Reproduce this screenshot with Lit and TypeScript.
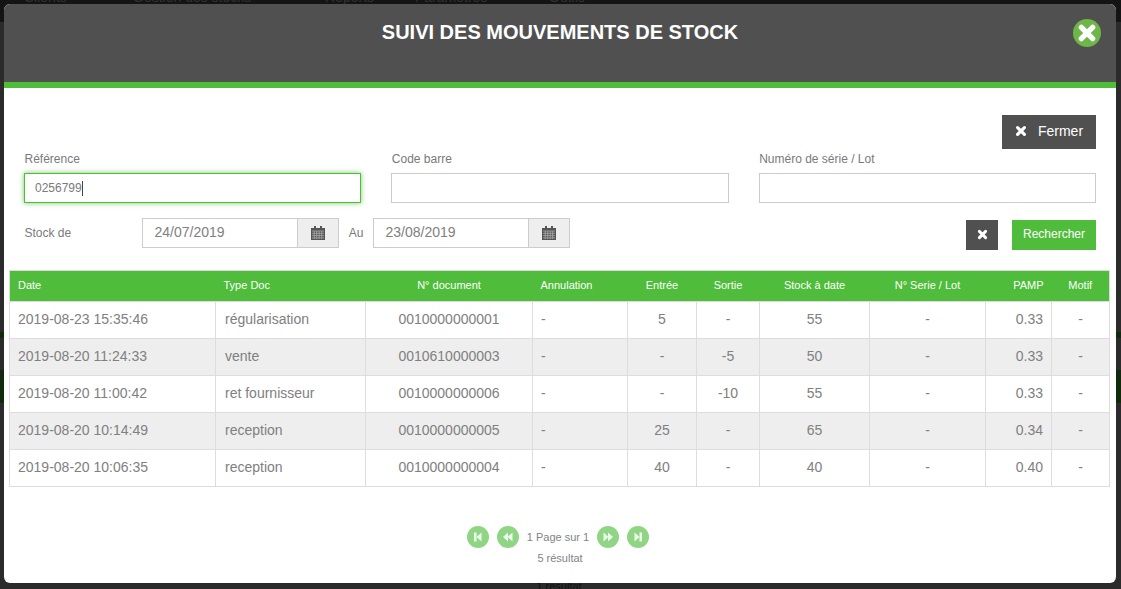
import { LitElement, html, css, svg } from "lit";
import { customElement } from "lit/decorators.js";

const rows = [
  ["2019-08-23 15:35:46", "régularisation", "0010000000001", "-", "5", "-", "55", "-", "0.33", "-"],
  ["2019-08-20 11:24:33", "vente", "0010610000003", "-", "-", "-5", "50", "-", "0.33", "-"],
  ["2019-08-20 11:00:42", "ret fournisseur", "0010000000006", "-", "-", "-10", "55", "-", "0.33", "-"],
  ["2019-08-20 10:14:49", "reception", "0010000000005", "-", "25", "-", "65", "-", "0.34", "-"],
  ["2019-08-20 10:06:35", "reception", "0010000000004", "-", "40", "-", "40", "-", "0.40", "-"],
];
const heads = ["Date", "Type Doc", "N° document", "Annulation", "Entrée", "Sortie", "Stock à date", "N° Serie / Lot", "PAMP", "Motif"];
const aligns = ["l", "l", "c", "l", "c", "c", "c", "c", "r", "c"];
const widths = [206, 150, 167, 95, 69, 63, 110, 116, 66, 58];

const times = (s: number) => html`<svg class="x" width=${s} height=${s} viewBox="0 0 12 12"><path d="M2.6 2.6 9.4 9.4M9.4 2.6 2.6 9.4" stroke="currentColor" stroke-width="3.2" stroke-linecap="round" fill="none"/></svg>`;
const calendar = html`<svg width="14" height="14" viewBox="0 0 14 14"><path fill="#555" d="M0 2h14v12H0z"/><path fill="#555" d="M3 0h2v3H3zM9 0h2v3H9z"/><path stroke="#b5b5b5" stroke-width=".7" fill="none" d="M1 5h12M1 7.300h12M1 9.600h12M1 11.900h12M3.200 5v8M5.700 5v8M8.200 5v8M10.700 5v8"/></svg>`;
const pagerIcons = {
  first: svg`<path d="M7 6.500h2.500v9H7zM14.500 6.500v9L9.500 11z"/>`,
  prev: svg`<path d="M11 6.500v9L6 11zM15.500 6.500v9L10.500 11z"/>`,
  next: svg`<path d="M6.500 6.500v9L11.500 11zM11 6.500v9L16 11z"/>`,
  last: svg`<path d="M7.500 6.500v9L12.500 11zM12.500 6.500H15v9h-2.500z"/>`,
};
const pager = (k: keyof typeof pagerIcons) => html`<span class="pg"><svg width="22" height="22" viewBox="0 0 22 22" fill="#fff" fill-opacity=".85">${pagerIcons[k]}</svg></span>`;

@customElement("app-root")
export class AppRoot extends LitElement {
  static styles = css`
    :host {
      display: block; width: 1121px; height: 589px;
      background: linear-gradient(#141414 0 22px, #2b2b2b 22px 332px, #112a0e 332px 338px, #2b2b2b 338px 370px, #112a0e 370px 403px, #2b2b2b 403px);
      font-family: "Liberation Sans", Arial, sans-serif; color: #7a7a7a; overflow: hidden;
    }
    * { box-sizing: border-box; }
    .top-strip { height: 4px; overflow: hidden; display: flex; align-items: flex-end; font-size: 14px; line-height: 16px; color: #303030; white-space: nowrap; background: #141414; }
    .top-strip span { flex: none; margin-bottom: -1px; }
    .n1 { margin-left: 24px; width: 109px; }
    .n2 { width: 192px; }
    .n3 { width: 90px; }
    .n4 { width: 134px; }
    .bottom-strip { height: 6px; overflow: hidden; text-align: center; font-size: 11px; line-height: 6px; color: #111; padding-right: 3px; }
    .modal { width: 1112px; height: 579px; margin-left: 4px; background: #fff; border-radius: 6px; overflow: hidden; display: flex; flex-direction: column; }
    .head { height: 84px; flex: none; background: #505050; border-bottom: 6px solid #4fbc3b; display: flex; justify-content: center; padding-top: 15px; position: relative; }
    .head h1 { margin: 0; font-size: 20px; line-height: 26px; font-weight: 700; color: #fff; }
    .close { position: absolute; top: 15px; right: 15px; width: 28px; height: 28px; border-radius: 50%; background: #6db648; color: #fff; display: flex; align-items: center; justify-content: center; }
    .body { padding: 27px 20px 0; flex: 1; display: flex; flex-direction: column; }
    .close-row { display: flex; justify-content: flex-end; }
    .btn { border: 0; font: inherit; color: #fff; display: flex; align-items: center; justify-content: center; padding: 0; }
    .fermer { width: 94px; height: 34px; background: #505050; font-size: 14px; gap: 11px; padding-bottom: 2px; }
    .fields { display: grid; grid-template-columns: repeat(3, 1fr); column-gap: 30px; margin-top: 3px; }
    label { display: block; font-size: 12px; line-height: 14px; color: #7a7a7a; margin-bottom: 7px; padding-left: .5px; }
    .input { height: 30px; border: 1px solid #ccc; background: #fff; font-size: 12px; line-height: 28px; padding-left: 10px; display: flex; align-items: center; }
    .focus { border: 1px solid #4fbc3b; box-shadow: 0 0 5px rgba(79,188,59,.8); }
    .caret { width: 1px; height: 15px; background: #444; }
    .stock { display: flex; align-items: center; margin-top: 15px; height: 30px; }
    .stock-label { width: 118px; font-size: 12px; padding-left: .5px; }
    .date { width: 197px; height: 30px; border: 1px solid #ccc; display: flex; font-size: 14px; color: #808080; }
    .date .val { flex: 1; padding-left: 11.500px; line-height: 26px; }
    .date .cal { width: 41px; background: #eee; border-left: 1px solid #ccc; display: flex; align-items: center; justify-content: center; padding-right: 1px; }
    .au { width: 34px; text-align: center; font-size: 12px; }
    .actions { margin-left: auto; display: flex; gap: 14px; margin-top: 3px; }
    .clear { width: 32px; height: 30px; background: #505050; }
    .search { width: 84px; height: 30px; background: #4fbc3b; font-size: 12px; padding-bottom: 2px; }
    .table-wrap { margin: 22px -15px 0; }
    table { border-collapse: collapse; table-layout: fixed; width: 1100px; }
    th { background: #4fbc3b; color: #fff; font-size: 11px; font-weight: 400; height: 31px; padding: 0 8px 2px; border: 0; border-top: 1px solid #ddd; }
    th:first-child { border-left: 1px solid #ddd; }
    th:last-child { border-right: 1px solid #ddd; }
    td { height: 37px; font-size: 14px; color: #808080; border: 1px solid #ddd; padding: 0 8px 2px; white-space: nowrap; }
    td:nth-child(2) { padding-left: 9px; }
    tr.alt td { background: #eee; }
    .l { text-align: left; } .c { text-align: center; } .r { text-align: right; }
    .pager { margin-top: 39px; display: flex; flex-direction: column; align-items: center; font-size: 11px; color: #808488; }
    .pg-row { display: flex; align-items: center; height: 22px; margin-right: 4px; }
    .pg { width: 22px; height: 22px; border-radius: 50%; background: #90d584; display: block; }
    .pg svg { display: block; }
    .gap { width: 8px; }
    .pg-text { margin: 0 8px; }
    .res { margin: 2px 0 0; line-height: 16px; }
  `;
  render() {
    return html`
      <div class="top-strip">
        <span class="n1">Clients</span>
        <span class="n2">Gestion des stocks</span>
        <span class="n3">Reports</span>
        <span class="n4">Paramètres</span>
        <span>Outils</span>
      </div>
      <div class="modal">
        <div class="head">
          <h1>SUIVI DES MOUVEMENTS DE STOCK</h1>
          <span class="close">${times(20)}</span>
        </div>
        <div class="body">
          <div class="close-row"><button class="btn fermer">${times(12)}<span>Fermer</span></button></div>
          <div class="fields">
            <div><label>Référence</label><div class="input focus">0256799<span class="caret"></span></div></div>
            <div><label>Code barre</label><div class="input"></div></div>
            <div><label>Numéro de série / Lot</label><div class="input"></div></div>
          </div>
          <div class="stock">
            <span class="stock-label">Stock de</span>
            <div class="date"><span class="val">24/07/2019</span><span class="cal">${calendar}</span></div>
            <span class="au">Au</span>
            <div class="date"><span class="val">23/08/2019</span><span class="cal">${calendar}</span></div>
            <div class="actions">
              <button class="btn clear">${times(11)}</button>
              <button class="btn search">Rechercher</button>
            </div>
          </div>
          <div class="table-wrap">
            <table>
              <colgroup>${widths.map((w) => html`<col style="width:${w}px" />`)}</colgroup>
              <thead><tr>${heads.map((h, i) => html`<th class=${aligns[i]}>${h}</th>`)}</tr></thead>
              <tbody>
                ${rows.map((r, ri) => html`<tr class=${ri % 2 ? "alt" : ""}>${r.map((c, i) => html`<td class=${aligns[i]}>${c}</td>`)}</tr>`)}
              </tbody>
            </table>
          </div>
          <div class="pager">
            <div class="pg-row">
              ${pager("first")}<span class="gap"></span>${pager("prev")}
              <span class="pg-text">1 Page sur 1</span>
              ${pager("next")}<span class="gap"></span>${pager("last")}
            </div>
            <div class="res">5 résultat</div>
          </div>
        </div>
      </div>
      <div class="bottom-strip">1 résultat</div>
    `;
  }
}
